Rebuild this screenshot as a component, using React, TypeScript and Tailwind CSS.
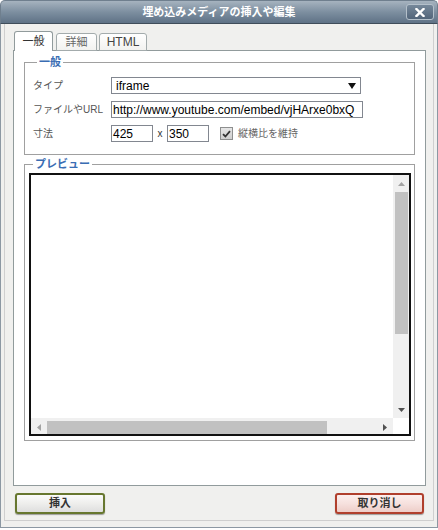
const font = "font-['Liberation_Sans','Noto_Sans_CJK_JP',sans-serif]";

function Arrow({ dir, dark }: { dir: 'up' | 'down' | 'left' | 'right'; dark?: boolean }) {
  const fill = dark ? '#505050' : '#a3a3a3';
  const pts: Record<string, string> = {
    up: '0,4 7,4 3.5,0',
    down: '0,0 7,0 3.5,4',
    left: '4,0 4,7 0,3.5',
    right: '0,0 0,7 4,3.5',
  };
  const vertical = dir === 'up' || dir === 'down';
  return (
    <svg width={vertical ? 7 : 4} height={vertical ? 4 : 7} viewBox={vertical ? '0 0 7 4' : '0 0 4 7'}>
      <polygon points={pts[dir]} fill={fill} />
    </svg>
  );
}

export default function App() {
  return (
    <div className={`w-[438px] h-[530px] bg-white ${font}`}>
      <div className="flex h-[528px] flex-col">
        {/* title bar */}
        <div className="flex h-[24px] shrink-0 items-center rounded-t-[5px] border border-[#6f7f8e] border-b-[#3f4d5a] bg-gradient-to-b from-[#a6b3bf] via-[#7d8fa0] to-[#5f7286] px-[3px]">
          <div className="w-[28px]" />
          <div className="flex-1 text-center text-[11px] font-bold leading-none text-white">
            埋め込みメディアの挿入や編集
          </div>
          <div className="flex h-[16px] w-[28px] items-center justify-center rounded-[3px] border border-[#b4c0ca] bg-gradient-to-b from-[#76889a] to-[#52657a]">
            <svg width="10" height="9" viewBox="0 0 10 9">
              <path d="M1.5 1 L8.5 8 M8.5 1 L1.5 8" stroke="white" strokeWidth="2.4" strokeLinecap="square" />
            </svg>
          </div>
        </div>

        {/* body */}
        <div className="flex flex-1 flex-col border-x border-b border-[#8c98a3] bg-[#f0f0ee] px-[3px] pb-[6px]">
          <div className="flex flex-1 flex-col border-x border-b border-[#cfcfcf] pl-[8px] pr-[7px] pt-[7px] pb-[6px]">
            {/* tabs */}
            <div className="relative z-10 flex items-end pl-[1px] -mb-px">
              <div className="flex h-[20px] w-[39px] items-center justify-center rounded-t-[3px] border border-b-0 border-[#919b9c] bg-white text-[11px] text-[#333]">
                一般
              </div>
              <div className="ml-[3px] flex h-[18px] w-[41px] items-center justify-center rounded-t-[3px] border border-[#a3abac] bg-gradient-to-b from-white to-[#f2f2f0] text-[11px] text-[#666]">
                詳細
              </div>
              <div className="ml-[2px] flex h-[18px] w-[48px] items-center justify-center rounded-t-[3px] border border-[#a3abac] bg-gradient-to-b from-white to-[#f2f2f0] text-[12px] text-[#444]">
                HTML
              </div>
            </div>

            {/* panel */}
            <div className="flex-1 border border-[#919b9c] bg-white px-[10px] pt-[4px]">
              <fieldset className="border border-[#a0a0a0] px-[8px] pt-[8px] pb-[12px]">
                <legend className="ml-[4px] px-[2px] text-[11px] font-bold leading-[14px] text-[#3a6db3]">一般</legend>
                <div className="flex flex-col gap-[7px] text-[10px] text-[#555]">
                  <div className="flex h-[17px] items-center">
                    <span className="w-[78px]">タイプ</span>
                    <div className="flex h-[17px] w-[250px] items-center justify-between border border-[#828790] bg-white pl-[4px] pr-[4px] text-[12px] text-black">
                      <span>iframe</span>
                      <svg width="8" height="6" viewBox="0 0 8 6">
                        <polygon points="0,0 8,0 4,6" fill="#111" />
                      </svg>
                    </div>
                  </div>
                  <div className="flex h-[17px] items-center">
                    <span className="w-[78px] whitespace-nowrap">ファイルやURL</span>
                    <div className="flex h-[17px] w-[252px] items-center border border-[#828790] bg-white pl-[1px] text-[12px] text-black">
                      http://www.youtube.com/embed/vjHArxe0bxQ
                    </div>
                  </div>
                  <div className="flex h-[17px] items-center">
                    <span className="w-[78px]">寸法</span>
                    <div className="flex h-[17px] w-[42px] items-center border border-[#828790] bg-white pl-[1px] text-[12px] text-black">
                      425
                    </div>
                    <span className="w-[14px] text-center text-[10px] text-[#333]">x</span>
                    <div className="flex h-[17px] w-[42px] items-center border border-[#828790] bg-white pl-[1px] text-[12px] text-black">
                      350
                    </div>
                    <div className="ml-[11px] flex h-[13px] w-[13px] items-center justify-center border border-[#8e8f8f] bg-gradient-to-b from-[#e6e6e6] to-[#cfcfcf]">
                      <svg width="9" height="8" viewBox="0 0 9 8">
                        <path d="M1 4.2 L3.4 6.5 L8 1.2" stroke="#333" strokeWidth="1.8" fill="none" />
                      </svg>
                    </div>
                    <span className="ml-[5px] text-[#666]">縦横比を維持</span>
                  </div>
                </div>
              </fieldset>

              <fieldset className="mt-[2px] border border-[#a0a0a0] pl-[4px] pr-[3px] pb-[4px] pt-[2px]">
                <legend className="ml-[4px] px-[2px] text-[11px] font-bold leading-[14px] text-[#3a6db3]">プレビュー</legend>
                <div className="grid h-[263px] grid-cols-[1fr_16px] grid-rows-[1fr_16px] border-2 border-[#111] bg-white">
                  <div className="bg-white" />
                  {/* vertical scrollbar */}
                  <div className="flex flex-col bg-[#f0f0f0] pl-[2px] pr-[1px]">
                    <div className="flex h-[17px] items-center justify-center">
                      <Arrow dir="up" />
                    </div>
                    <div className="h-[142px] bg-[#c1c1c1]" />
                    <div className="flex-1" />
                    <div className="flex h-[16px] items-center justify-center">
                      <Arrow dir="down" dark />
                    </div>
                  </div>
                  {/* horizontal scrollbar */}
                  <div className="flex items-center bg-[#f0f0f0] pt-[2px]">
                    <div className="flex h-[13px] w-[16px] items-center justify-center">
                      <Arrow dir="left" />
                    </div>
                    <div className="h-[13px] w-[280px] bg-[#c1c1c1]" />
                    <div className="flex-1" />
                    <div className="flex h-[13px] w-[16px] items-center justify-center">
                      <Arrow dir="right" dark />
                    </div>
                  </div>
                  <div className="bg-white" />
                </div>
              </fieldset>
            </div>

            {/* buttons */}
            <div className="mt-[7px] flex justify-between pl-[2px] pr-[2px]">
              <div className="flex h-[21px] w-[90px] items-center justify-center rounded-[3px] border-2 border-[#67772f] bg-gradient-to-b from-[#fbfbfb] via-[#eeeeec] to-[#dedede] text-[11px] font-bold text-[#333] shadow-[0_1px_1px_rgba(0,0,0,0.35)]">
                挿入
              </div>
              <div className="flex h-[21px] w-[89px] items-center justify-center rounded-[3px] border-2 border-[#b03f2c] bg-gradient-to-b from-[#fcefed] via-[#f6e1de] to-[#edcdc8] text-[11px] font-bold text-[#333] shadow-[0_1px_1px_rgba(0,0,0,0.35)]">
                取り消し
              </div>
            </div>
          </div>
        </div>
      </div>
    </div>
  );
}
